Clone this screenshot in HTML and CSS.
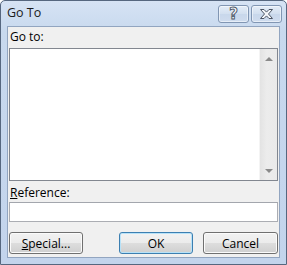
FILE: index.html
```html
<!DOCTYPE html>
<html lang="en">
<head>
    <meta charset="UTF-8">
    <title>Go To</title>
    <link rel="stylesheet" href="styles.css">
</head>
<body>
    <div class="window">
        <div class="titlebar">
            <span class="title">Go To</span>
            <div class="caption-buttons">
                <span class="cap-btn help">?</span>
                <span class="cap-btn close">
                    <svg width="15" height="12" viewBox="0 0 15 12">
                        <path d="M1.5 1.5h3.5l2.5 2.6 2.5-2.6h3.5l-4 4.5 4 4.5h-3.5l-2.5-2.6-2.5 2.6h-3.5l4-4.5z" fill="#f4f6f9" stroke="#4d5665" stroke-width="1" stroke-linejoin="round"/>
                    </svg>
                </span>
            </div>
        </div>

        <div class="client">
            <div class="label">Go to:</div>
            <div class="listbox">
                <div class="list-items"></div>
                <div class="scrollbar">
                    <span class="arrow up"></span>
                    <span class="arrow down"></span>
                </div>
            </div>

            <div class="label ref"><u>R</u>eference:</div>
            <div class="textbox"></div>

            <div class="buttons">
                <button class="btn"><u>S</u>pecial...</button>
                <div class="btn-group">
                    <button class="btn default">OK</button>
                    <button class="btn wide">Cancel</button>
                </div>
            </div>
        </div>
    </div>
</body>
</html>
```

FILE: styles.css
```css
body {
    margin: 0;
    font-family: "Open Sans", "Noto Sans", sans-serif;
    font-size: 12px;
    color: #000;
}
.window {
    width: 287px;
    height: 265px;
    box-sizing: border-box;
    border: 1px solid #56677f;
    border-radius: 5px 5px 0 0;
    background: linear-gradient(#d6e3f4, #c8d9ee 30px, #c3d4ec);
    display: flex;
    flex-direction: column;
}
.titlebar {
    height: 25px;
    display: flex;
    align-items: flex-start;
    justify-content: space-between;
    padding-left: 6px;
}
.title {
    margin-top: 3px;
    font-size: 12.5px;
    color: #1b1b1b;
}
.caption-buttons {
    display: flex;
    gap: 2px;
    margin-top: 4px;
    margin-right: 4px;
}
.cap-btn {
    width: 29px;
    height: 16px;
    border: 1px solid #8196b3;
    border-radius: 3px;
    background: linear-gradient(#e4edf8, #d2dfef 50%, #c8d7eb 51%, #cfdcee);
    box-shadow: inset 0 0 0 1px rgba(255, 255, 255, 0.5);
    display: flex;
    align-items: center;
    justify-content: center;
}
.help {
    font-family: "DejaVu Sans", sans-serif;
    font-weight: bold;
    font-size: 15px;
    line-height: 16px;
    color: #f4f6f9;
    -webkit-text-stroke: 0.9px #4d5665;
}
.client {
    flex: 1;
    margin: 0 6px 6px 6px;
    border: 1px solid #92a5c0;
    background: #f0f0f0;
    padding: 0 1px 3px 1px;
    display: flex;
    flex-direction: column;
}
.label {
    height: 21px;
    line-height: 20px;
    padding-left: 1px;
}
.label.ref {
    line-height: 23px;
}
.listbox {
    height: 133px;
    box-sizing: border-box;
    border: 1px solid #828790;
    background: #fff;
    display: flex;
}
.list-items {
    flex: 1;
}
.scrollbar {
    width: 17px;
    background: linear-gradient(90deg, #e3e3e3, #ececec 40%, #eaeaea);
    border-left: 1px solid #f4f4f4;
    position: relative;
}
.arrow {
    position: absolute;
    left: 5px;
    width: 0;
    height: 0;
    border-left: 4px solid transparent;
    border-right: 4px solid transparent;
}
.arrow.up {
    top: 8px;
    border-bottom: 4px solid #8a8a8a;
}
.arrow.down {
    bottom: 7px;
    border-top: 4px solid #8a8a8a;
}
.textbox {
    height: 20px;
    box-sizing: border-box;
    border: 1px solid #abadb3;
    border-top-color: #a3a6ad;
    background: #fff;
}
.buttons {
    margin-top: 10px;
    display: flex;
    justify-content: space-between;
}
.btn-group {
    display: flex;
    gap: 10px;
}
.btn {
    width: 74px;
    height: 22px;
    padding: 0;
    font: inherit;
    color: #000;
    border: 1px solid #707070;
    border-radius: 3px;
    background: linear-gradient(#f2f2f2, #ebebeb 50%, #dddddd 51%, #cfcfcf);
    box-shadow: inset 0 0 0 1px #fbfbfb;
}
.btn.wide {
    width: 75px;
}
.btn.default {
    border-color: #3c7fb1;
    box-shadow: inset 0 0 0 1px #b8e2f8;
}
```
